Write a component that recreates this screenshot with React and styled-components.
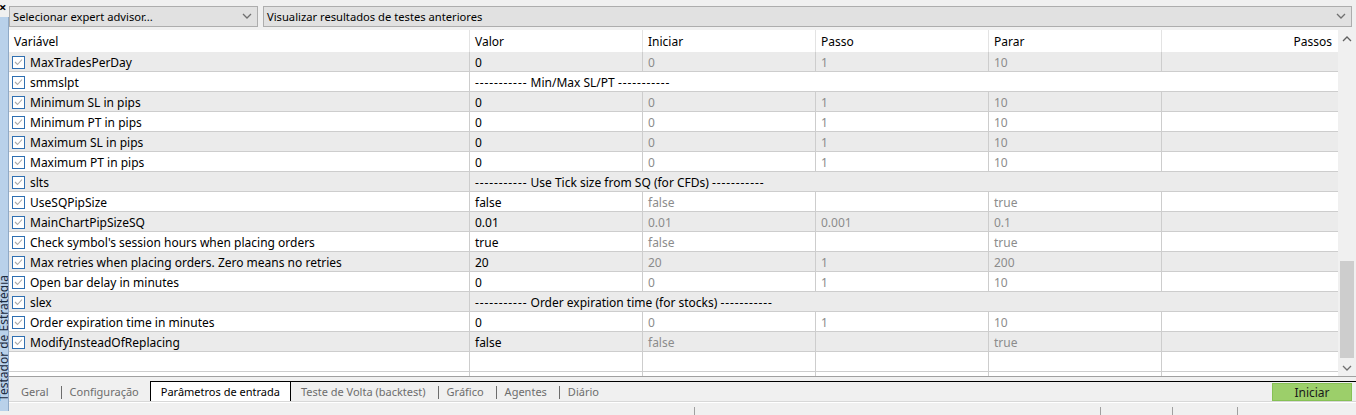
import styled, { createGlobalStyle } from 'styled-components'

const Global = createGlobalStyle`
  html, body { margin: 0; padding: 0; background: #f0f0f0; }
  body { font-family: "Noto Sans", "Open Sans", sans-serif; font-size: 12px; color: #000; }
  * { box-sizing: border-box; }
`

const rows = [
  { name: 'MaxTradesPerDay', v: ['0', '0', '1', '10'] },
  { name: 'smmslpt', section: 'Min/Max SL/PT' },
  { name: 'Minimum SL in pips', v: ['0', '0', '1', '10'] },
  { name: 'Minimum PT in pips', v: ['0', '0', '1', '10'] },
  { name: 'Maximum SL in pips', v: ['0', '0', '1', '10'] },
  { name: 'Maximum PT in pips', v: ['0', '0', '1', '10'] },
  { name: 'slts', section: 'Use Tick size from SQ (for CFDs)' },
  { name: 'UseSQPipSize', v: ['false', 'false', '', 'true'] },
  { name: 'MainChartPipSizeSQ', v: ['0.01', '0.01', '0.001', '0.1'] },
  { name: "Check symbol's session hours when placing orders", v: ['true', 'false', '', 'true'] },
  { name: 'Max retries when placing orders. Zero means no retries', v: ['20', '20', '1', '200'] },
  { name: 'Open bar delay in minutes', v: ['0', '0', '1', '10'] },
  { name: 'slex', section: 'Order expiration time (for stocks)' },
  { name: 'Order expiration time in minutes', v: ['0', '0', '1', '10'] },
  { name: 'ModifyInsteadOfReplacing', v: ['false', 'false', '', 'true'] },
]

const tabs = ['Geral', 'Configuração', 'Parâmetros de entrada', 'Teste de Volta (backtest)', 'Gráfico', 'Agentes', 'Diário']

const DASH = '-----------'

function Chevron({ up }) {
  return (
    <svg width="10" height="6" viewBox="0 0 10 6">
      <path d={up ? 'M1 5 L5 1 L9 5' : 'M1 1 L5 5 L9 1'} fill="none" stroke={up ? '#606060' : '#707070'} strokeWidth="1.3" />
    </svg>
  )
}

function Check() {
  return (
    <Box>
      <svg width="9" height="8" viewBox="0 0 9 8">
        <path d="M1 4 L3.5 6.5 L8 1.5" fill="none" stroke="#a8a8a8" strokeWidth="1.1" />
      </svg>
    </Box>
  )
}

function EmptyRow({ short }) {
  return (
    <Row $short={short}>
      <Cell /><Cell /><Cell /><Cell /><Cell /><Cell />
    </Row>
  )
}

export default function App() {
  return (
    <>
      <Global />
      <Page>
        <SideStrip>
          <Close>×</Close>
          <SideTab><span>Testador de Estratégia</span></SideTab>
        </SideStrip>
        <Main>
          <Toolbar>
            <Select $w="249px">Selecionar expert advisor...<Chevron /></Select>
            <Select $grow>Visualizar resultados de testes anteriores<Chevron /></Select>
          </Toolbar>
          <GridWrap>
            <Table>
              <Header>
                <HCell>Variável</HCell>
                <HCell>Valor</HCell>
                <HCell>Iniciar</HCell>
                <HCell>Passo</HCell>
                <HCell>Parar</HCell>
                <HCell $right>Passos</HCell>
              </Header>
              {rows.map((r, i) => (
                <Row key={r.name} $alt={i % 2 === 0}>
                  <NameCell><Check />{r.name}</NameCell>
                  {r.section ? (
                    <SectionCell>
                      <Dashes>{DASH}</Dashes>&nbsp;{r.section}&nbsp;<Dashes>{DASH}</Dashes>
                    </SectionCell>
                  ) : (
                    <>
                      <Cell>{r.v[0]}</Cell>
                      <Cell $dim>{r.v[1]}</Cell>
                      <Cell $dim>{r.v[2]}</Cell>
                      <Cell $dim>{r.v[3]}</Cell>
                      <Cell />
                    </>
                  )}
                </Row>
              ))}
              <EmptyRow />
              <EmptyRow short />
            </Table>
            <Scrollbar>
              <Arrow><Chevron up /></Arrow>
              <Track><Thumb /></Track>
              <Arrow><Chevron /></Arrow>
            </Scrollbar>
          </GridWrap>
          <TabBar>
            <Tabs>
              {tabs.map((t, i) => (
                <Tab key={t} $active={i === 2} $sep={i !== 0 && i !== 2 && i !== 3}>{t}</Tab>
              ))}
            </Tabs>
            <StartButton>Iniciar</StartButton>
          </TabBar>
          <Status>
            <StatusCell $w="686px" />
            <StatusCell $w="406px" />
            <StatusCell $w="72px" />
            <StatusCell $w="65px" />
            <StatusCell />
          </Status>
        </Main>
      </Page>
    </>
  )
}

const Page = styled.div`
  display: flex;
  width: 1356px;
  height: 415px;
  overflow: hidden;
`

const SideStrip = styled.div`
  width: 9px;
  display: flex;
  flex-direction: column;
  flex-shrink: 0;
`

const Close = styled.div`
  height: 17px;
  font-size: 13px;
  font-weight: bold;
  line-height: 14px;
  margin-left: -1px;
`

const SideTab = styled.div`
  flex: 1;
  margin-bottom: 4px;
  background: #b9d1ea;
  border-right: 1px solid #8fa9c6;
  overflow: hidden;
  display: flex;
  align-items: flex-end;
  padding-bottom: 10px;
  span {
    writing-mode: vertical-rl;
    transform: rotate(180deg);
    white-space: nowrap;
    font-size: 12px;
    color: #1a2a40;
    margin-left: -5px;
  }
`

const Main = styled.div`
  flex: 1;
  display: flex;
  flex-direction: column;
  min-width: 0;
`

const Toolbar = styled.div`
  height: 30px;
  display: flex;
  align-items: center;
  gap: 5px;
  padding: 2px 4px 0 0;
`

const Select = styled.div`
  width: ${p => p.$w || 'auto'};
  flex: ${p => (p.$grow ? 1 : 'none')};
  height: 21px;
  background: #e1e1e1;
  border: 1px solid #adadad;
  display: flex;
  align-items: center;
  justify-content: space-between;
  padding: 0 5px 0 3px;
  font-size: 11.2px;
  color: #000;
`

const GridWrap = styled.div`
  height: 347px;
  display: flex;
  background: #fff;
  border-bottom: 1px solid #a0a0a0;
`

const Table = styled.div`
  flex: 1;
  display: flex;
  flex-direction: column;
  overflow: hidden;
`

const cols = '461px 173px 173px 173px 173px 1fr'

const Header = styled.div`
  display: grid;
  grid-template-columns: ${cols};
  height: 22px;
  flex-shrink: 0;
  background: #fff;
`

const HCell = styled.div`
  padding: 0 6px 0 5px;
  display: flex;
  align-items: center;
  justify-content: ${p => (p.$right ? 'flex-end' : 'flex-start')};
  border-right: 1px solid #e3e3e3;
  &:last-child { border-right: none; }
`

const Row = styled.div`
  display: grid;
  grid-template-columns: ${cols};
  height: 20px;
  flex-shrink: 0;
  background: ${p => (p.$alt ? '#ebebeb' : '#fff')};
  border-bottom: ${p => (p.$short ? 'none' : '1px solid #cdcdcd')};
`

const Cell = styled.div`
  padding: 1px 0 0 5px;
  display: flex;
  align-items: center;
  color: ${p => (p.$dim ? '#8c8c8c' : '#000')};
  border-right: 1px solid #cdcdcd;
  white-space: nowrap;
  &:last-child { border-right: none; }
`

const NameCell = styled(Cell)`
  padding-left: 3px;
  gap: 5px;
`

const SectionCell = styled(Cell)`
  grid-column: 2 / -1;
  border-right: none;
`

const Dashes = styled.span`
  letter-spacing: 0.9px;
`

const Box = styled.div`
  width: 13px;
  height: 13px;
  border: 1px solid #2f6fb1;
  background: #fff;
  display: flex;
  align-items: center;
  justify-content: center;
  flex-shrink: 0;
`

const Scrollbar = styled.div`
  width: 18px;
  background: #f0f0f0;
  display: flex;
  flex-direction: column;
`

const Arrow = styled.div`
  height: 17px;
  display: flex;
  align-items: center;
  justify-content: center;
`

const Track = styled.div`
  flex: 1;
  display: flex;
  flex-direction: column;
  justify-content: flex-end;
  padding: 0 2px 1px;
`

const Thumb = styled.div`
  height: 97px;
  background: #cdcdcd;
`

const TabBar = styled.div`
  height: 25px;
  display: flex;
  align-items: flex-start;
  justify-content: space-between;
  padding-top: 4px;
  padding-right: 4px;
  border-bottom: 1px solid #d8d8d8;
`

const Tabs = styled.div`
  display: flex;
  flex: 1;
  height: 20px;
  padding-left: 2px;
`

const Tab = styled.div`
  padding: 0 10px 0 ${p => (p.$active ? '10px' : '9px')};
  display: flex;
  align-items: center;
  white-space: nowrap;
  font-size: 11px;
  color: ${p => (p.$active ? '#000' : '#6d6d6d')};
  background: ${p => (p.$active ? '#fff' : 'transparent')};
  border: 1px solid ${p => (p.$active ? '#000' : 'transparent')};
  border-bottom: none;
  height: 20px;
  position: relative;
  &::before {
    content: '';
    display: ${p => (p.$sep ? 'block' : 'none')};
    position: absolute;
    left: 0;
    top: 4px;
    height: 13px;
    border-left: 1px solid #6d6d6d;
  }
  ${p => p.$active && `
    &::after {
      content: '';
      position: absolute;
      left: 100%;
      top: -1px;
      width: 1200px;
      border-top: 1px solid #000;
    }
  `}
`

const StartButton = styled.div`
  width: 80px;
  height: 18px;
  margin-top: 2px;
  background: #9ccf6a;
  border: 1px solid #86c154;
  display: flex;
  align-items: center;
  justify-content: center;
  color: #1a1a1a;
  position: relative;
  z-index: 1;
`

const Status = styled.div`
  flex: 1;
  display: flex;
  border-top: 1px solid #fff;
  padding-top: 4px;
`

const StatusCell = styled.div`
  width: ${p => p.$w || 'auto'};
  flex: ${p => (p.$w ? 'none' : 1)};
  border-right: 1px solid #a0a0a0;
  &:last-child { border-right: none; }
`
